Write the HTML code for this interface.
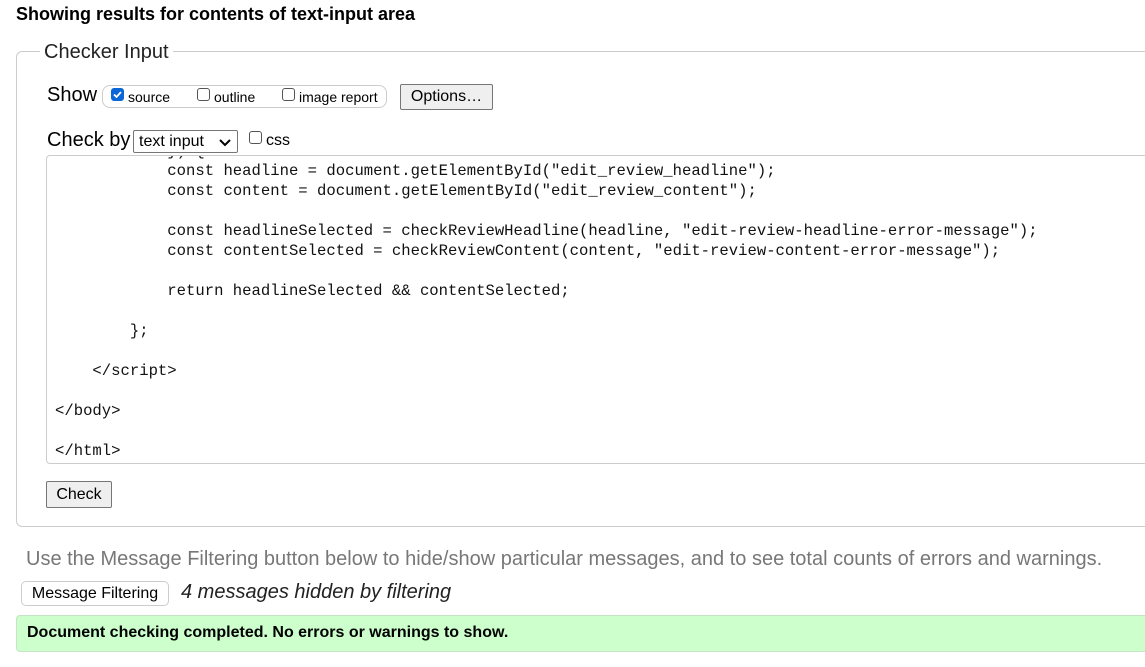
<!DOCTYPE html>
<html><head><style>
body{margin:0;background:#fff;font-family:"Liberation Sans",Arial,sans-serif;color:#000;width:1145px;height:667px;overflow:hidden;position:relative}
.a{position:absolute}
h2{position:absolute;left:16px;top:4px;margin:0;font-size:18px;font-weight:bold}
.fs{left:16px;top:51px;width:1140px;height:476px;border:1px solid #ccc;border-radius:6px;box-sizing:border-box}
.leg{left:40px;top:41px;background:#fff;padding:0 4px;font-size:20px;color:#222}
.cb{display:inline-block;width:13px;height:13px;border:1px solid #555;border-radius:3px;box-sizing:border-box;vertical-align:1px;margin-right:4px;background:#fff}
.cb.on{background:#0b67d8;border-color:#0b67d8;position:relative}
.btn{border:1px solid #767676;background:#efefef;border-radius:2px;font-size:16px;box-sizing:border-box;text-align:center}
.ta{left:46px;top:155px;width:1110px;height:309px;border:1px solid #ccc;border-radius:4px;box-sizing:border-box;overflow:hidden}
pre{margin:0;position:absolute;left:8px;top:-15px;font-family:"Liberation Mono",monospace;font-size:15.6px;line-height:20px;color:#111}
</style></head><body>
<h2>Showing results for contents of text-input area</h2>
<div class="a fs"></div>
<div class="a leg">Checker Input</div>
<div class="a" style="left:47px;top:84px;font-size:20px">Show</div>
<div class="a" style="left:102px;top:85px;width:285px;height:23px;border:1px solid #ccc;border-radius:8px;box-sizing:border-box"></div>
<div class="a" style="left:111px;top:88px;font-size:14px"><span class="cb on"><svg width="11" height="11" viewBox="0 0 11 11" style="position:absolute;left:0;top:0"><path d="M2 5.5l2.5 2.5 4.5-5" stroke="#fff" stroke-width="1.8" fill="none"/></svg></span>source</div>
<div class="a" style="left:197px;top:88px;font-size:14px"><span class="cb"></span>outline</div>
<div class="a" style="left:282px;top:88px;font-size:14px"><span class="cb"></span>image report</div>
<div class="a btn" style="left:400px;top:84px;width:93px;height:26px;line-height:24px">Options…</div>
<div class="a" style="left:47px;top:129px;font-size:20px">Check by</div>
<div class="a" style="left:133px;top:130px;width:105px;height:23px;border:1px solid #767676;border-radius:2px;box-sizing:border-box;font-size:16px;line-height:21px;padding-left:5px">text input<svg width="12" height="8" viewBox="0 0 12 8" style="position:absolute;right:6px;top:8px"><path d="M1 1l5 5 5-5" stroke="#000" stroke-width="2" fill="none"/></svg></div>
<div class="a" style="left:249px;top:131px;font-size:16px"><span class="cb"></span>css</div>
<div class="a ta"><pre>            }) {
            const headline = document.getElementById("edit_review_headline");
            const content = document.getElementById("edit_review_content");

            const headlineSelected = checkReviewHeadline(headline, "edit-review-headline-error-message");
            const contentSelected = checkReviewContent(content, "edit-review-content-error-message");

            return headlineSelected &amp;&amp; contentSelected;

        };

    &lt;/script&gt;

&lt;/body&gt;

&lt;/html&gt;</pre></div>
<div class="a btn" style="left:46px;top:481px;width:66px;height:27px;line-height:25px">Check</div>
<div class="a" style="left:26px;top:548px;font-size:20px;color:#777">Use the Message Filtering button below to hide/show particular messages, and to see total counts of errors and warnings.</div>
<div class="a" style="left:21px;top:581px;width:148px;height:25px;border:1px solid #ccc;border-radius:5px;box-sizing:border-box;font-size:16px;line-height:23px;text-align:center">Message Filtering</div>
<div class="a" style="left:181px;top:581px;font-size:20px;font-style:italic;color:#222">4 messages hidden by filtering</div>
<div class="a" style="left:16px;top:615px;width:1140px;height:37px;background:#ccffcc;border:1px solid #c5e3c5;border-radius:4px;box-sizing:border-box"></div>
<div class="a" style="left:27px;top:624px;font-size:16px;font-weight:bold">Document checking completed. No errors or warnings to show.</div>
</body></html>
